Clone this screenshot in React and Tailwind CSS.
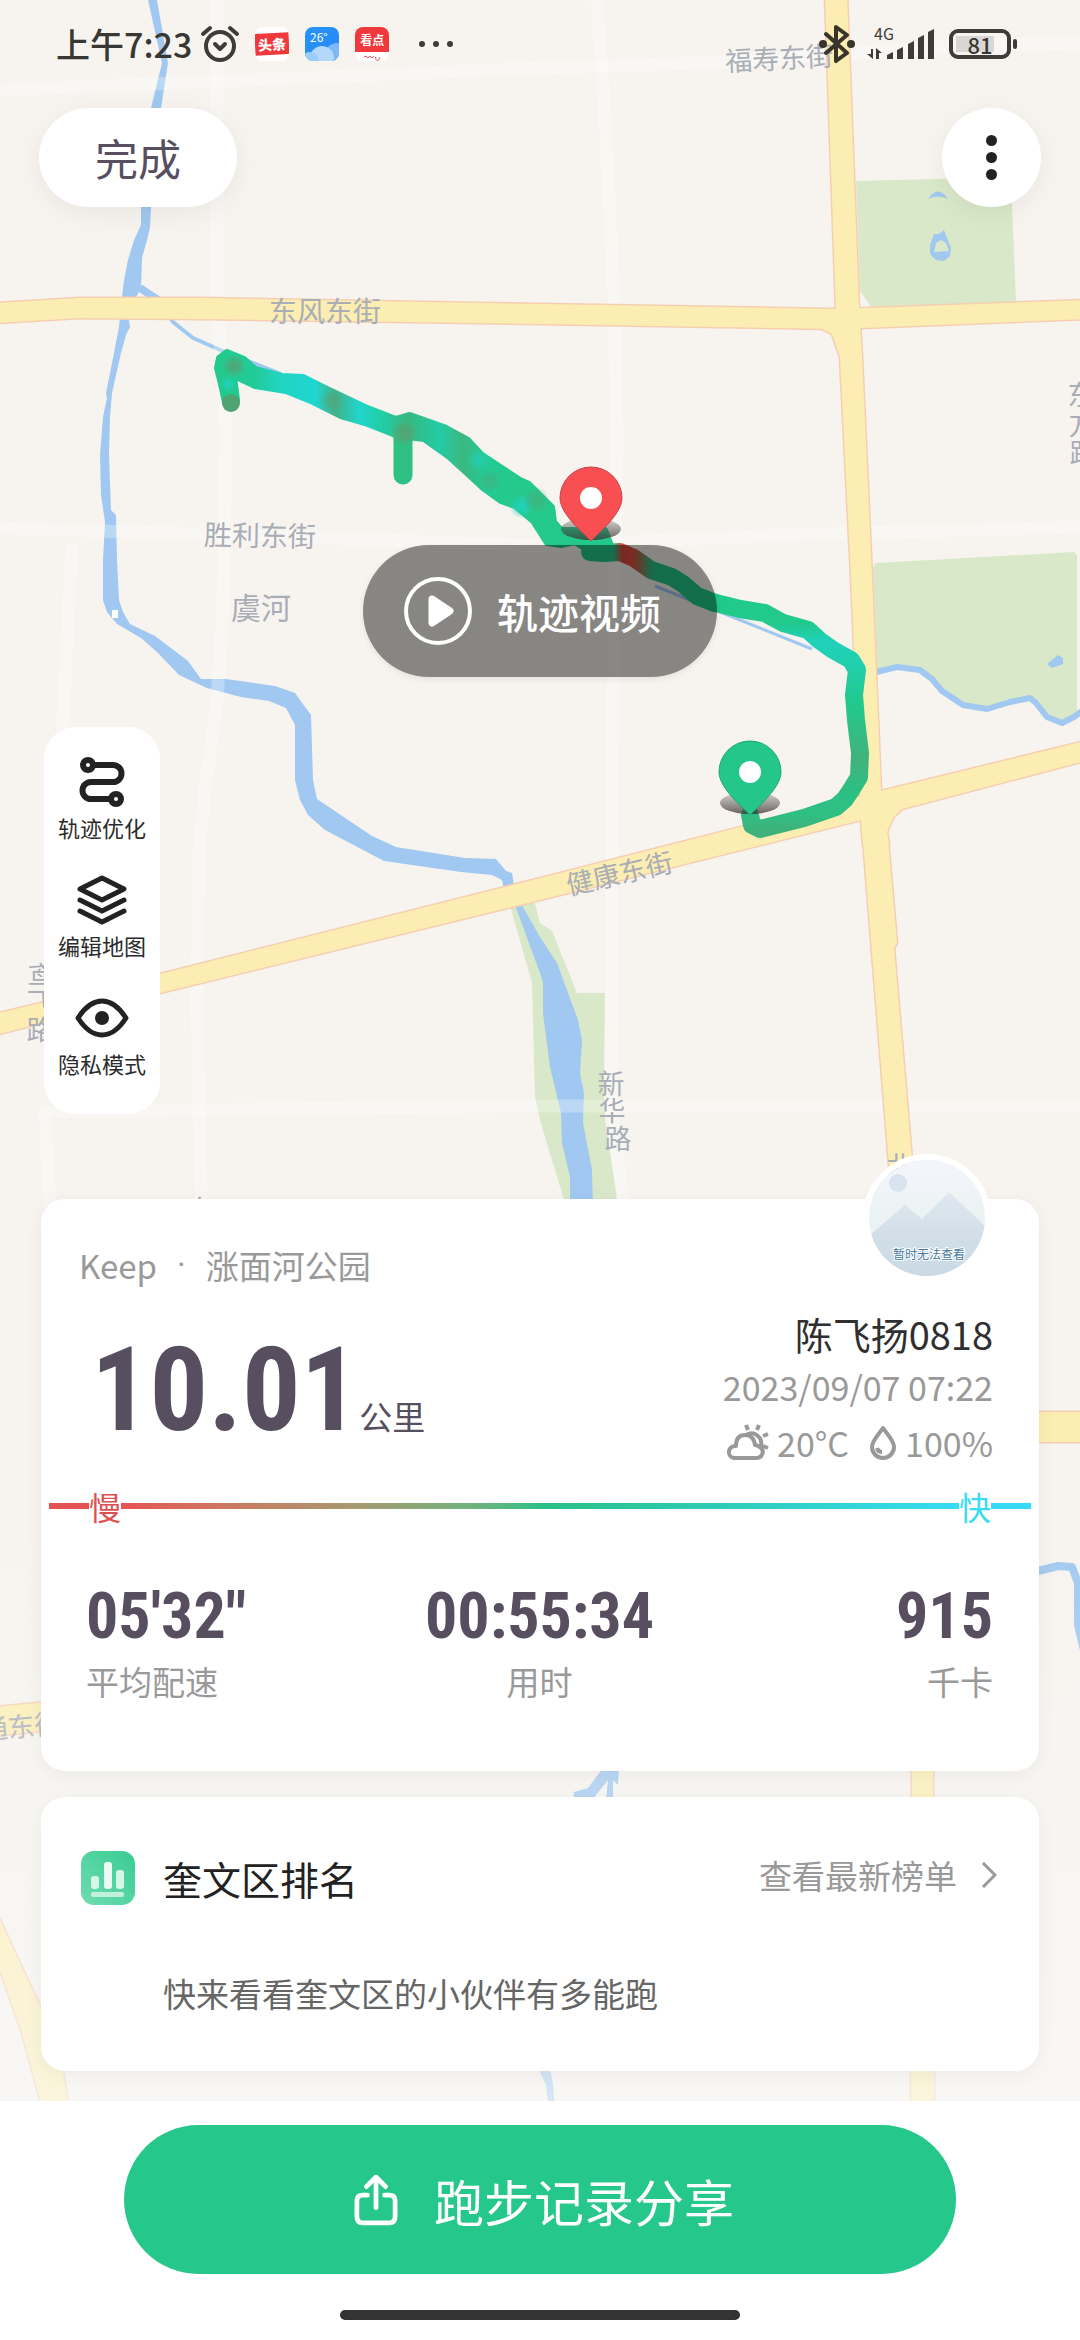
import React from "react";

const PARKS = [
  "856,181 1012,177 1012,205 1016,303 872,308 860,291",
  "873,567 876,563 1074,552 1077,555 1077,712 1062,724 1047,718 1033,699 1010,702 987,709 963,705 942,691 920,671 897,666 877,670",
  "509,902 534,900 540,923 552,931 577,993 605,993 604,1073 605,1120 619,1210 567,1210 540,1120 535,1097 532,983",
];

const RIVERS = [
  "148,0 157,0 168,63 161,108 151,207 150,228 147,240 142,258 141,287 136,298 129,320 130,327 126,335 121,353 112,393 110,417 109,455 111,510 116,515 117,560 119,600 123,612 130,624 155,636 188,661 201,679 226,679 275,686 295,693 300,700 311,715 313,780 317,799 372,836 396,847 465,858 496,859 506,871 512,873 515,890 504,890 502,880 492,875 461,872 384,861 325,830 308,815 300,800 295,780 295,725 286,708 269,701 241,697 207,688 179,675 158,653 141,638 117,624 107,612 103,600 103,560 105,522 101,495 100,455 103,417 107,398 106,393 114,353 119,327 122,297 124,280 128,260 134,240 141,225 141,207 151,108 162,63",
  "512,898 520,902 540,937 557,963 578,1020 582,1040 580,1073 584,1093 583,1123 592,1170 593,1210 570,1210 570,1177 562,1143 561,1113 550,1067 543,1013 543,983 540,973 515,905",
  "604,1765 619,1765 618,1785 613,1780 613,1800 606,1800 608,1780 592,1800 573,1800 574,1792 588,1788 600,1772",
  "538,2068 550,2068 553,2085 555,2110 549,2110 546,2085",
];

const ROADS = [
  "-5,303 80,298 200,298 540,304 830,309 872,308 1085,300 1085,319 861,328 836,329 540,324 200,319 80,318 -5,323",
  "825,-5 847,-5 859,308 862,357 872,577 881,791 888,840 897,943 894,948 912,1160 914,1215 893,1215 889,1165 863,840 860,791 851,577 840,357 832,334 822,329 836,312",
  "-5,1014 160,974 513,885 858,797 881,791 1085,741 1085,761 902,809 893,818 887,832 889,845 863,845 861,820 540,900 160,993 -5,1035",
  "1000,1412 1085,1412 1085,1442 1000,1442",
  "-5,1707 60,1701 60,1729 -5,1736",
  "912,1760 933,1760 934,2110 911,2110",
  "-5,1910 0,1920 31,1987 59,2047 69,2110 43,2110 21,2030 0,1970 -5,1955",
];

const STREETS = [
  "M0 90 L300 78 L540 68 L730 62 L960 46 L1080 43",
  "M217 0 V300 L226 430 L223 610 L217 700 L205 790 L199 850 L197 1000 L201 1200",
  "M0 528 L300 537 L540 546 L780 535 L1080 527",
  "M72 545 L64 700 L58 840 M45 1112 L50 1210",
  "M40 1112 L200 1110 L540 1106 L1080 1106",
  "M597 0 L605 120 L614 300 L617 440 L613 700 L611 1100 L624 1210",
];

const LABEL = "#a9adb6";

function Pin({ x, y, fill, edge }) {
  return (
    <g transform={`translate(${x} ${y})`}>
      <ellipse cx="0" cy="31" rx="30" ry="11" fill="url(#pinShadow)" />
      <path
        d="M0 43 C-4 38 -31 17 -31 0 A31 31 0 0 1 31 0 C31 17 4 38 0 43 Z"
        fill={fill}
        stroke={edge}
        strokeWidth="1"
      />
      <circle r="11" fill="#fff" />
    </g>
  );
}

function MapLabel({ x, y, size = 27, rotate = 0, children }) {
  return (
    <text x={x} y={y} fontSize={size} fill={LABEL} textAnchor="middle" dominantBaseline="central" transform={`rotate(${rotate} ${x} ${y})`}>
      {children}
    </text>
  );
}

function RouteMap() {
  return (
    <svg aria-hidden="true" viewBox="0 0 1080 2103" className="absolute inset-x-0 top-0 w-full">
      <defs>
        <linearGradient id="routeWest" gradientUnits="userSpaceOnUse" x1="215" y1="0" x2="615" y2="0">
          <stop offset="0" stopColor="#22c98a" />
          <stop offset=".1" stopColor="#22cb97" />
          <stop offset=".16" stopColor="#20d4c0" />
          <stop offset=".25" stopColor="#20d6d2" />
          <stop offset=".3" stopColor="#42b088" />
          <stop offset=".36" stopColor="#20d6cc" />
          <stop offset=".42" stopColor="#22cda4" />
          <stop offset=".48" stopColor="#36b87e" />
          <stop offset=".56" stopColor="#23cba6" />
          <stop offset=".62" stopColor="#3bb880" />
          <stop offset=".68" stopColor="#22ca95" />
          <stop offset=".76" stopColor="#24c98a" />
          <stop offset="1" stopColor="#22c98c" />
        </linearGradient>
        <linearGradient id="routeMid" gradientUnits="userSpaceOnUse" x1="590" y1="0" x2="720" y2="0">
          <stop offset="0" stopColor="#22c98c" />
          <stop offset=".18" stopColor="#28c587" />
          <stop offset=".25" stopColor="#e0483e" />
          <stop offset=".34" stopColor="#d9523f" />
          <stop offset=".48" stopColor="#27c587" />
          <stop offset="1" stopColor="#1fcb8a" />
        </linearGradient>
        <linearGradient id="routeEast" gradientUnits="userSpaceOnUse" x1="0" y1="600" x2="0" y2="830">
          <stop offset="0" stopColor="#20ca88" />
          <stop offset=".1" stopColor="#22c98c" />
          <stop offset=".18" stopColor="#20d2ba" />
          <stop offset=".28" stopColor="#20cfae" />
          <stop offset=".45" stopColor="#22c98c" />
          <stop offset=".7" stopColor="#42b27c" />
          <stop offset=".82" stopColor="#2dbf82" />
          <stop offset=".93" stopColor="#2fbf82" />
          <stop offset="1" stopColor="#3fb27b" />
        </linearGradient>
        <radialGradient id="slowSpot">
          <stop offset="0" stopColor="#5f9c6e" />
          <stop offset=".5" stopColor="#55a273" stopOpacity=".8" />
          <stop offset="1" stopColor="#4bb080" stopOpacity="0" />
        </radialGradient>
        <radialGradient id="fastSpot">
          <stop offset="0" stopColor="#20d3c0" />
          <stop offset="1" stopColor="#20d3c0" stopOpacity="0" />
        </radialGradient>
        <linearGradient id="pinShadow" x1="0" y1="0" x2="0" y2="1">
          <stop offset="0" stopColor="#4a4444" stopOpacity=".2" />
          <stop offset="1" stopColor="#3a3030" stopOpacity=".75" />
        </linearGradient>
        <linearGradient id="mapFade" x1="0" y1="0" x2="0" y2="1">
          <stop offset="0" stopColor="#f9f9f9" stopOpacity="0" />
          <stop offset="1" stopColor="#f9f9f9" stopOpacity=".6" />
        </linearGradient>
      </defs>
      <rect width="1080" height="2103" fill="#f7f4ef" />
      <g fill="#d9e8c8">
        {PARKS.map((p) => (
          <polygon key={p} points={p} />
        ))}
      </g>
      <g fill="#a0c8f0">
        {RIVERS.map((p) => (
          <polygon key={p} points={p} />
        ))}
        <path d="M928 199 Q938 184 948 199 Q938 194 928 199 Z" />
        <path fillRule="evenodd" d="M934 234 L939 234 L944 230 L951 248 L950 256 L944 261 L936 260 L930 254 L930 245 Z M936 243 L934 252 L949 251 L946 243 L941 240 Z" />
        <path d="M1047 664 L1058 655 L1063 658 L1063 664 L1052 668 Z" />
      </g>
      <rect x="112" y="610" width="6" height="8" fill="#fff" />
      <g fill="none" stroke="#a0c8f0" strokeLinejoin="round">
        <path d="M140 288 L158 300" strokeWidth="8" />
        <path d="M158 300 L173 322 L193 338 L225 352 L281 374" strokeWidth="4" />
        <path d="M655 586 L680 596 L740 620 L812 649" strokeWidth="3" />
        <path d="M876 672 L897 667 L920 670 L932 679 L942 691 L963 705 L987 709 L1010 702 L1030 698 L1036 703 L1047 717 L1062 723 L1074 717 L1082 711" strokeWidth="6" />
        <path d="M1030 1573 L1058 1566 L1072 1567 L1078 1583 L1078 1625 L1084 1650" strokeWidth="8" />
      </g>
      <g fill="none" stroke="#fff" strokeOpacity=".28" strokeWidth="13">
        {STREETS.map((d) => (
          <path key={d} d={d} />
        ))}
      </g>
      <g fill="none" stroke="#f6cfb3" strokeWidth="3">
        {ROADS.map((p) => (
          <polygon key={p} points={p} />
        ))}
      </g>
      <g fill="#fceeb2">
        {ROADS.map((p) => (
          <polygon key={p} points={p} />
        ))}
      </g>

      <MapLabel x={779} y={57} rotate={-3}>福寿东街</MapLabel>
      <MapLabel x={325} y={310} size={28}>东风东街</MapLabel>
      <MapLabel x={260} y={534} size={28} rotate={1}>胜利东街</MapLabel>
      <MapLabel x={261} y={606} size={30}>虞河</MapLabel>
      <MapLabel x={619} y={872} rotate={-13}>健康东街</MapLabel>
      <MapLabel x={611} y={1082}>新</MapLabel>
      <MapLabel x={612} y={1109}>华</MapLabel>
      <MapLabel x={618} y={1137}>路</MapLabel>
      <MapLabel x={1081} y={393}>东</MapLabel>
      <MapLabel x={1082} y={423}>方</MapLabel>
      <MapLabel x={1083} y={451}>路</MapLabel>
      <MapLabel x={41} y={974}>鸢</MapLabel>
      <MapLabel x={40} y={1001}>飞</MapLabel>
      <MapLabel x={40} y={1028}>路</MapLabel>
      <MapLabel x={900} y={1164}>北</MapLabel>
      <MapLabel x={205} y={1208}>年</MapLabel>
      <MapLabel x={21} y={1725} rotate={-5}>通东街</MapLabel>

      <g strokeLinejoin="round" strokeLinecap="round">
        <path d="M590 552 L604 553 L620 552 L634 558 L651 570 L672 577 L683 584 L697 596 L715 603" fill="none" stroke="url(#routeMid)" strokeWidth="18" />
        <path d="M750 815 L752 825 L760 829 L804 818 L836 807 L845 799 L851 790 L859 777 L860 753 L856 720 L854 695 L857 670 L851 660 L833 650 L819 640 L808 630 L783 623 L765 613 L740 609 L712 602" fill="none" stroke="url(#routeEast)" strokeWidth="18" />
        <path d="M403 428 V475" fill="none" stroke="#2ec183" strokeWidth="19" />
        <path
          d="M227 352 L219 358 L217 368 L221 384 L225 402 Q231 412 237 400 L234 376 L255 386 L286 391 L313 402 L341 416 L365 423 L393 434 L408 437 L424 439 L448 456 L469 475 L483 488 L501 501 L515 506 L533 521 L547 543 L561 545 L575 542 L590 552 L612 548 L605 530 L575 530 L561 530 L554 522 L552 507 L529 484 L520 480 L482 455 L468 440 L444 427 L410 415 L396 419 L365 407 L327 389 L303 377 L282 376 L255 369 L244 359 Z"
          fill="url(#routeWest)"
          stroke="url(#routeWest)"
          strokeWidth="6"
        />
      </g>
      <circle cx="228" cy="384" r="8" fill="url(#fastSpot)" />
      <circle cx="231" cy="403" r="9" fill="#4fa372" />
      <circle cx="234" cy="366" r="12" fill="url(#slowSpot)" opacity=".8" />
      <circle cx="404" cy="433" r="14" fill="url(#slowSpot)" opacity=".8" />
      <circle cx="332" cy="401" r="12" fill="url(#slowSpot)" opacity=".5" />
      <circle cx="490" cy="481" r="12" fill="url(#slowSpot)" opacity=".4" />
      <circle cx="478" cy="460" r="12" fill="url(#fastSpot)" opacity=".7" />
      <circle cx="522" cy="506" r="13" fill="url(#fastSpot)" />
      <circle cx="536" cy="500" r="14" fill="url(#slowSpot)" opacity=".4" />

      <Pin x={591} y={498} fill="#f85052" edge="#c8434b" />
      <Pin x={750} y={772} fill="#24c789" edge="#1fa775" />
      <rect y="1500" width="1080" height="603" fill="url(#mapFade)" />
    </svg>
  );
}

function AlarmIcon() {
  return (
    <svg viewBox="0 0 40 38" className="h-[38px] w-10" fill="none" stroke="#3d3c39" strokeLinecap="round" strokeLinejoin="round">
      <circle cx="20" cy="21" r="14" strokeWidth="4" />
      <path d="M3 9 L10 3 M30 3 L37 9" strokeWidth="4" />
      <path d="M15 19 L20 24 L25 19" strokeWidth="4" />
    </svg>
  );
}

function StatusBar() {
  return (
    <div className="flex h-[88px] items-center justify-between pr-[63px] pl-14 text-[#383734]">
      <div className="flex items-center">
        <span className="text-[34px] leading-none font-medium">上午7:23</span>
        <span className="ml-2">
          <AlarmIcon />
        </span>
        <div className="ml-[15px] flex gap-4 text-white">
          <span className="flex size-[34px] items-center overflow-hidden rounded-lg bg-white">
            <span className="flex h-[22px] w-full -rotate-3 items-center justify-center bg-[#f0393c] text-[14px] leading-none font-black">头条</span>
          </span>
          <svg viewBox="0 0 34 34" className="size-[34px]">
            <defs>
              <linearGradient id="sky" x1="0" y1="0" x2="1" y2="1">
                <stop offset="0" stopColor="#2494fb" />
                <stop offset="1" stopColor="#2a86f4" />
              </linearGradient>
              <clipPath id="skyClip">
                <rect width="34" height="34" rx="8" />
              </clipPath>
            </defs>
            <g clipPath="url(#skyClip)">
              <rect width="34" height="34" fill="url(#sky)" />
              <circle cx="32" cy="28" r="12" fill="#7db9f8" />
              <circle cx="17" cy="31" r="12" fill="#b4d8fb" />
              <circle cx="5" cy="34" r="9" fill="#9dcbfa" />
            </g>
            <text x="5" y="15" fontSize="12" fill="#fff">26°</text>
          </svg>
          <span className="flex size-[34px] flex-col overflow-hidden rounded-lg bg-white">
            <span className="flex h-[25px] items-center justify-center bg-[#f0393c] text-[12px] leading-none font-bold">看点</span>
            <svg viewBox="0 0 34 9" className="h-[9px] w-full" fill="none" stroke="#e2575c" strokeWidth="1">
              <path d="M9 5 l2 -1 2 2 2 -2 2 2 2 -2 M21 5 a2 2 0 1 0 3 0" />
            </svg>
          </span>
        </div>
        <svg viewBox="0 0 34 6" className="ml-[30px] h-1.5 w-[34px]" fill="#3d3c39">
          <circle cx="3" cy="3" r="3" />
          <circle cx="17" cy="3" r="3" />
          <circle cx="31" cy="3" r="3" />
        </svg>
      </div>
      <div className="flex items-center">
        <svg viewBox="0 0 36 38" className="h-[38px] w-9" fill="none" stroke="#38342a" strokeWidth="4" strokeLinecap="round" strokeLinejoin="round">
          <path d="M7 9 L28 28 L17 36 V2 L28 10 L7 28" />
          <circle cx="4" cy="19" r="2" fill="#38342a" />
          <circle cx="32" cy="19" r="2" fill="#38342a" />
        </svg>
        <svg viewBox="0 0 68 34" className="ml-3 h-[34px] w-[68px]" fill="#3d3c39">
          <text x="7" y="13" fontSize="16" fill="#3d3c39">4G</text>
          <path d="M4 22 h2 v10 l-6 -5 h4 Z M9 32 v-11 l6 5 h-3 v6 Z" />
          <path d="M20 28 l6 -3 v7 h-6 Z M30 23 l6 -3 v12 h-6 Z M41 17 l6 -3 v18 h-6 Z M51 11 l6 -3 v24 h-6 Z M61 5 l6 -3 v30 h-6 Z" />
        </svg>
        <div className="ml-3.5 flex h-[30px] w-[62px] items-center justify-center rounded-[9px] border-4 border-[#3d3c39] p-[3px]">
          <span className="flex h-full w-full items-center justify-center bg-linear-to-r from-[#d9d7d4] from-80% to-transparent to-80% text-[22px] leading-none font-medium">81</span>
        </div>
        <span className="ml-0.5 h-[10px] w-1 rounded-sm bg-[#3d3c39]" />
      </div>
    </div>
  );
}

function TrackIcon() {
  return (
    <svg viewBox="0 0 54 54" className="size-[54px]" fill="none" stroke="#222" strokeWidth="6">
      <circle cx="13" cy="10" r="5" />
      <circle cx="41" cy="44" r="5" />
      <path d="M19 10 H38 a8 8 0 0 1 0 17 H16 a8 8 0 0 0 0 17 H35" />
    </svg>
  );
}

function LayersIcon() {
  return (
    <svg viewBox="0 0 54 54" className="size-[54px]" fill="none" stroke="#222" strokeWidth="5" strokeLinecap="round" strokeLinejoin="round">
      <path d="M27 5 L49 16 L27 27 L5 16 Z M5 27 L27 38 L49 27 M5 38 L27 49 L49 38" />
    </svg>
  );
}

function EyeIcon() {
  return (
    <svg viewBox="0 0 54 54" className="size-[54px]" fill="none" stroke="#222" strokeWidth="5" strokeLinejoin="round">
      <path d="M3 27 Q14 10 27 10 T51 27 Q40 44 27 44 T3 27 Z" />
      <circle cx="27" cy="27" r="7" fill="#222" stroke="none" />
    </svg>
  );
}

function Tool({ icon, label }) {
  return (
    <button type="button" className="flex flex-col items-center gap-1">
      {icon}
      <span className="text-[22px] leading-7 text-[#2b2b2b]">{label}</span>
    </button>
  );
}

function Avatar() {
  return (
    <div className="absolute -top-[45px] right-12 size-32 overflow-hidden rounded-full border-[6px] border-white">
      <svg viewBox="0 0 116 116" className="size-full">
        <defs>
          <linearGradient id="avSky" x1="0" y1="0" x2="0" y2="1">
            <stop offset="0" stopColor="#f4f5fd" />
            <stop offset=".45" stopColor="#ecf3f3" />
            <stop offset="1" stopColor="#e4edf5" />
          </linearGradient>
          <linearGradient id="avHill" x1="0" y1="0" x2="0" y2="1">
            <stop offset="0" stopColor="#e0e8f1" />
            <stop offset=".5" stopColor="#d2dfe8" />
            <stop offset="1" stopColor="#c9d9e5" />
          </linearGradient>
        </defs>
        <rect width="116" height="116" fill="url(#avSky)" />
        <circle cx="29" cy="23" r="9" fill="#d7e3ee" />
        <path d="M0 76 L36 45 L53 59 L80 32 L116 66 V116 H0 Z" fill="url(#avHill)" />
        <text x="60" y="99" fontSize="12" textAnchor="middle" fill="#47799e" stroke="#fff" strokeWidth="2" paintOrder="stroke">暂时无法查看</text>
      </svg>
    </div>
  );
}

function Stat({ value, label, align }) {
  return (
    <div className={`flex flex-1 flex-col gap-1 ${align}`}>
      <span className="font-['Roboto_Condensed','Liberation_Sans_Narrow',sans-serif] text-[64px] leading-[72px] font-bold text-[#574f60]">{value}</span>
      <span className="text-[33px] leading-[48px] text-[#999]">{label}</span>
    </div>
  );
}

function SummaryCard() {
  return (
    <section className="relative mx-[41px] mt-[85px] rounded-3xl bg-white pt-[42px] pb-[66px] shadow-[0_4px_20px_rgba(0,0,0,0.05)]">
      <Avatar />
      <p className="flex gap-5 px-[38px] text-[33px] leading-[48px] text-[#999]">
        <span>Keep</span>
        <span className="font-[Roboto]">·</span>
        <span>涨面河公园</span>
      </p>
      <div className="mt-[17px] flex h-[162px] justify-between pr-[46px] pl-[50px]">
        <p className="flex items-baseline text-[#574f60]">
          <span className="font-['Roboto_Condensed','Liberation_Sans_Narrow',sans-serif] text-[116px] leading-[168px] font-bold">10.01</span>
          <span className="text-[33px]">公里</span>
        </p>
        <div className="flex flex-col items-end text-[#999]">
          <p className="text-[38px] leading-[56px] text-[#2f2f2f]">陈飞扬0818</p>
          <p className="text-[34px] leading-[50px]">2023/09/07 07:22</p>
          <div className="mt-1.5 flex items-center gap-5 text-[34px] leading-[50px]">
            <span className="flex items-center gap-2">
              <svg viewBox="0 0 43 38" className="h-[38px] w-[43px]" fill="none" stroke="#999" strokeWidth="4">
                <path d="M8 34 H31 a6 6 0 0 0 3 -11 q-3 -2 -5 -2 C28 14 24 11 19 11 q-9 0 -9 11 a6 6 0 0 0 -2 12 Z" strokeLinejoin="round" />
                <path d="M20 11 q5 -3 9 -1 q8 4 6 13" />
                <path d="M20 1 l2 5 M33 1 l-2 5 M42 10 l-5 2 M42 24 l-5 -2" />
              </svg>
              20°C
            </span>
            <span className="flex items-center gap-2">
              <svg viewBox="0 0 28 36" className="h-9 w-7" fill="none" stroke="#999" strokeWidth="4" strokeLinejoin="round">
                <path d="M14 3 C11 8 3 15 3 22 a11 11 0 0 0 22 0 C25 15 17 8 14 3 Z" />
                <path d="M8 23 q1 4 5 4" />
              </svg>
              100%
            </span>
          </div>
        </div>
      </div>
      <div className="mx-2 mt-[14px] flex h-12 items-center text-[32px] leading-none">
        <span className="h-1.5 w-10 bg-[#e65355]" />
        <span className="text-[#dd5150]">慢</span>
        <span className="h-1.5 flex-1 bg-linear-to-r from-[#e65355] via-[#2bbf85] to-[#38dbf5]" />
        <span className="text-[#38dbf5]">快</span>
        <span className="h-1.5 w-10 bg-[#38dbf5]" />
      </div>
      <div className="mt-[51px] flex pr-[46px] pl-[45px]">
        <Stat value={"05'32\""} label="平均配速" align="items-start" />
        <Stat value="00:55:34" label="用时" align="items-center" />
        <Stat value="915" label="千卡" align="items-end" />
      </div>
    </section>
  );
}

function RankingCard() {
  return (
    <section className="mx-[41px] mt-[26px] flex flex-col gap-[62px] rounded-3xl bg-white pt-[54px] pr-[42px] pb-[52px] pl-10 shadow-[0_4px_20px_rgba(0,0,0,0.05)]">
      <div className="flex items-center">
        <svg viewBox="0 0 54 54" className="size-[54px]">
          <defs>
            <linearGradient id="rankTile" x1="1" y1="0" x2="0" y2="1">
              <stop offset="0" stopColor="#38cc92" />
              <stop offset="1" stopColor="#6fdcb0" />
            </linearGradient>
          </defs>
          <rect width="54" height="54" rx="13" fill="url(#rankTile)" />
          <rect x="10" y="25" width="8" height="13" rx="3" fill="#d6f6e8" />
          <rect x="23" y="11" width="8" height="27" rx="3" fill="#eafbf4" />
          <rect x="35" y="19" width="8" height="19" rx="3" fill="#d6f6e8" />
          <rect x="10" y="41" width="33" height="5" rx="2" fill="#c3f0dc" />
        </svg>
        <h2 className="ml-[28px] text-[39px] leading-[54px] text-[#222]">奎文区排名</h2>
        <a href="#ranking" className="ml-auto flex items-center gap-6 pb-1.5 text-[33px] leading-[48px] text-[#999]">
          查看最新榜单
          <svg viewBox="0 0 16 26" className="h-[26px] w-4" fill="none" stroke="#999" strokeWidth="3">
            <path d="M2 1 L14 13 L2 25" />
          </svg>
        </a>
      </div>
      <p className="ml-[82px] text-[33px] leading-[52px] text-[#666]">快来看看奎文区的小伙伴有多能跑</p>
    </section>
  );
}

export default function App() {
  return (
    <main className="relative min-h-screen overflow-hidden bg-white font-['Noto_Sans_CJK_SC',sans-serif]">
      <RouteMap />
      <div className="relative flex flex-col">
        <StatusBar />
        <header className="mt-5 flex justify-between px-[39px]">
          <button type="button" className="h-[99px] rounded-full bg-white px-14 text-[43px] leading-none text-[#574f60] shadow-[0_6px_28px_rgba(0,0,0,0.06)]">完成</button>
          <button type="button" aria-label="更多" className="flex size-[99px] flex-col items-center justify-center gap-1.5 rounded-full bg-white shadow-[0_6px_28px_rgba(0,0,0,0.06)]">
            <span className="size-[11px] rounded-full bg-[#222]" />
            <span className="size-[11px] rounded-full bg-[#222]" />
            <span className="size-[11px] rounded-full bg-[#222]" />
          </button>
        </header>
        <button type="button" className="mt-[338px] flex h-[132px] items-center gap-6 self-center rounded-full bg-black/45 pr-[56px] pl-10 text-[41px] leading-none font-medium text-white shadow-[0_2px_6px_rgba(0,0,0,0.08)]">
          <svg viewBox="0 0 70 70" className="size-[70px]">
            <circle cx="35" cy="35" r="32" fill="none" stroke="#fff" strokeWidth="4" />
            <path d="M29 23 L47 35 L29 47 Z" fill="#fff" stroke="#fff" strokeWidth="7" strokeLinejoin="round" />
          </svg>
          轨迹视频
        </button>
        <nav className="mt-[50px] ml-11 flex w-29 flex-col gap-8 self-start rounded-[32px] bg-white pt-7 pb-[37px]">
          <Tool icon={<TrackIcon />} label="轨迹优化" />
          <Tool icon={<LayersIcon />} label="编辑地图" />
          <Tool icon={<EyeIcon />} label="隐私模式" />
        </nav>
        <SummaryCard />
        <RankingCard />
        <footer className="mt-[30px] flex flex-col items-center bg-white px-[124px] pt-6 pb-5">
          <button type="button" className="flex h-[149px] w-full items-center justify-center gap-9 rounded-full bg-[#26c78b] pl-2 text-[50px] leading-none text-white">
            <svg viewBox="0 0 46 54" className="h-[52px] w-11" fill="none" stroke="#fff" strokeWidth="5" strokeLinecap="round" strokeLinejoin="round">
              <path d="M14 22 H9 q-6 0 -6 6 V44 q0 7 6 7 H37 q6 0 6 -7 V28 q0 -6 -6 -6 H32" />
              <path d="M23 35 V4 M13 13 L23 3 L33 13" />
            </svg>
            跑步记录分享
          </button>
          <span className="mt-9 h-2.5 w-[400px] rounded-full bg-[#333]" />
        </footer>
      </div>
    </main>
  );
}
